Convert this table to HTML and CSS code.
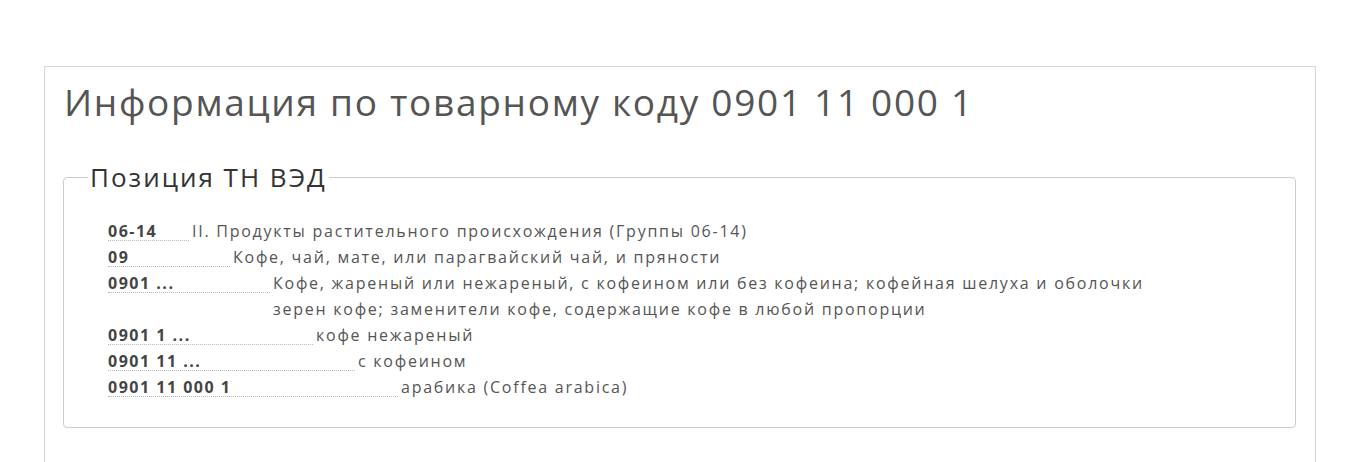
FILE: index.html
```html
<!DOCTYPE html>
<html lang="ru">
<head>
<meta charset="utf-8">
<title>Информация по товарному коду</title>
<link rel="stylesheet" href="styles.css">
</head>
<body>
<div class="panel">
  <h1 class="title">Информация по товарному коду 0901 11 000 1</h1>
  <fieldset class="group">
    <legend class="group-legend">Позиция ТН ВЭД</legend>
    <div class="tree">
      <div class="row"><span class="code lvl1">06-14</span><span class="desc">II. Продукты растительного происхождения (Группы 06-14)</span></div>
      <div class="row"><span class="code lvl2">09</span><span class="desc">Кофе, чай, мате, или парагвайский чай, и пряности</span></div>
      <div class="row"><span class="code lvl3">0901 ...</span><span class="desc">Кофе, жареный или нежареный, с кофеином или без кофеина; кофейная шелуха и оболочки зерен кофе; заменители кофе, содержащие кофе в любой пропорции</span></div>
      <div class="row"><span class="code lvl4">0901 1 ...</span><span class="desc">кофе нежареный</span></div>
      <div class="row"><span class="code lvl5">0901 11 ...</span><span class="desc">с кофеином</span></div>
      <div class="row"><span class="code lvl6">0901 11 000 1</span><span class="desc">арабика (Coffea arabica)</span></div>
    </div>
  </fieldset>
</div>
</body>
</html>
```

FILE: styles.css
```css
html, body {
  margin: 0;
  padding: 0;
  background: #ffffff;
}
body {
  font-family: "Open Sans", "Liberation Sans", sans-serif;
  color: #555555;
  padding-top: 66px;
}
.panel {
  width: 1272px;
  box-sizing: border-box;
  margin: 0 auto;
  border: 1px solid #d6d6d6;
  padding: 15px 19px 20px 18px;
  height: 400px;
}
.title {
  margin: 0 0 40px 1px;
  font-size: 37px;
  line-height: 40px;
  font-weight: 400;
  letter-spacing: 1.7px;
  color: #555555;
}
.group {
  margin: 0;
  padding: 0;
  border: 1px solid #cccccc;
  border-radius: 4px;
  min-width: 0;
}
.group-legend {
  margin-left: 24px;
  padding: 0 2px 0 2px;
  font-size: 26px;
  line-height: 30px;
  letter-spacing: 2px;
  color: #333333;
}
.tree {
  padding: 26px 114px 27px 44px;
}
.row {
  display: flex;
  align-items: baseline;
  font-size: 16px;
  line-height: 26px;
  letter-spacing: 1.75px;
}
.code {
  flex-shrink: 0;
  display: inline-block;
  font-weight: 700;
  color: #444444;
  line-height: 17px;
  letter-spacing: 1.5px;
  border-bottom: 1px dotted #b8b8b8;
  margin-right: 3px;
  white-space: nowrap;
}
.lvl1 { width: 81px; }
.lvl2 { width: 122px; }
.lvl3 { width: 162px; }
.lvl4 { width: 205px; }
.lvl5 { width: 247px; }
.lvl6 { width: 290px; }
.desc {
  flex: 1;
  min-width: 0;
}
```
